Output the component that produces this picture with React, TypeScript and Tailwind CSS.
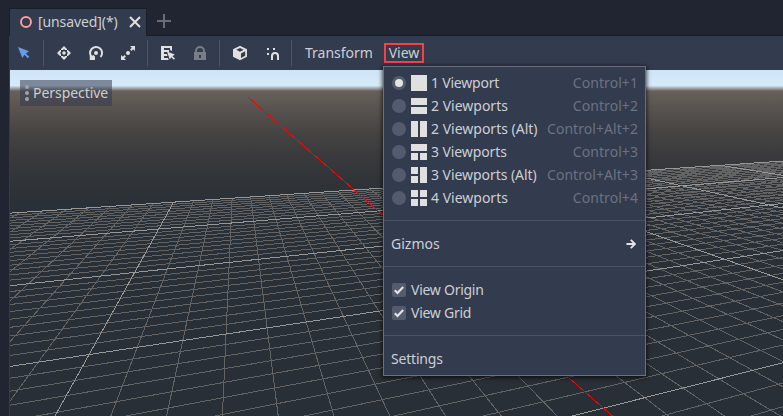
import type { ReactNode } from "react";

const HORIZON = 88;
const VP_A = 1868;
const VP_B = 237;

type Seg = { x1: number; y1: number; x2: number; y2: number; major: boolean };

// Slope of the far edge of the ground grid.
const FAR = 125.2 / (VP_A - 10);

function buildGrid(): Seg[] {
  const out: Seg[] = [];
  for (let n = 0; n <= 48; n++) {
    const m = 1 / (0.00799 - 0.0001466 * n) / (VP_A - 10);
    out.push({
      x1: 0,
      y1: HORIZON + m * VP_A,
      x2: 800,
      y2: HORIZON + m * (VP_A - 800),
      major: n % 10 === 0,
    });
  }
  for (let k = -9; k <= 52; k++) {
    if (k === 10) continue;
    const d = (55 + 55.8 * k - VP_B) / 328;
    const t = (FAR * (VP_A - VP_B)) / (1 + FAR * d);
    out.push({
      x1: VP_B + d * t,
      y1: HORIZON + t,
      x2: VP_B + d * 340,
      y2: HORIZON + 340,
      major: k % 10 === 0,
    });
  }
  return out.sort((a, b) => Number(a.major) - Number(b.major));
}

const GRID = buildGrid();

function Scene() {
  return (
    <svg className="block h-[346px] w-full" viewBox="10 70 773 346" preserveAspectRatio="none">
      <defs>
        <linearGradient id="sky" gradientUnits="userSpaceOnUse" x1="0" y1="70" x2="0" y2="416">
          <stop offset="0" stopColor="#cfe5f7" />
          <stop offset="0.045" stopColor="#d5eaf9" />
          <stop offset="0.061" stopColor="#686059" />
          <stop offset="0.1" stopColor="#5c5652" />
          <stop offset="0.175" stopColor="#474544" />
          <stop offset="0.25" stopColor="#393a3c" />
          <stop offset="0.32" stopColor="#303438" />
          <stop offset="0.39" stopColor="#2a3037" />
          <stop offset="1" stopColor="#292f36" />
        </linearGradient>
      </defs>
      <rect x="10" y="70" width="773" height="346" fill="url(#sky)" />
      <g shapeRendering="crispEdges">
        {GRID.map((s, i) => (
          <line key={i} x1={s.x1} y1={s.y1} x2={s.x2} y2={s.y2} stroke={s.major ? "#989898" : "#636363"} />
        ))}
        <line x1="248.5" y1="97.5" x2="613" y2="416.5" stroke="#ff0000" />
      </g>
    </svg>
  );
}

function Icon({ children, className = "" }: { children: ReactNode; className?: string }) {
  return (
    <svg viewBox="0 0 16 16" className={`size-4 shrink-0 ${className}`} fill="#e0e0e0">
      {children}
    </svg>
  );
}

const Divider = () => <div className="h-[26px] w-px shrink-0 bg-[#4c5365]" />;

const LAYOUTS: Record<string, string> = {
  one: "M0 0h16v16H0z",
  two: "M0 0h16v7H0zM0 9h16v7H0z",
  twoAlt: "M0 0h7v16H0zM9 0h7v16H9z",
  three: "M0 0h16v7H0zM0 9h7v7H0zM9 9h7v7H9z",
  threeAlt: "M0 0h7v7H0zM0 9h7v7H0zM9 0h7v16H9z",
  four: "M0 0h7v7H0zM9 0h7v7H9zM0 9h7v7H0zM9 9h7v7H9z",
};

const VIEWPORTS = [
  { label: "1 Viewport", keys: "Control+1", icon: "one", tracking: "tracking-[-0.2px]" },
  { label: "2 Viewports", keys: "Control+2", icon: "two", tracking: "" },
  { label: "2 Viewports (Alt)", keys: "Control+Alt+2", icon: "twoAlt", tracking: "" },
  { label: "3 Viewports", keys: "Control+3", icon: "three", tracking: "tracking-[-0.1px]" },
  { label: "3 Viewports (Alt)", keys: "Control+Alt+3", icon: "threeAlt", tracking: "tracking-[-0.05px]" },
  { label: "4 Viewports", keys: "Control+4", icon: "four", tracking: "" },
];

function MenuLine() {
  return (
    <div className="flex h-[23px] items-center">
      <div className="h-px w-full bg-[#4a5163]" />
    </div>
  );
}

function CheckItem({ label }: { label: string }) {
  return (
    <div className="flex h-[23px] items-center pt-px pl-2">
      <svg viewBox="0 0 14 14" className="size-3.5 shrink-0">
        <rect width="14" height="14" rx="2" fill="#545b6c" />
        <path d="M2.8 7.3 5.5 10 11.2 4" fill="none" stroke="#e4e4e4" strokeWidth="2.1" />
      </svg>
      <span className="-mt-px ml-[5px] tracking-[-0.26px]">{label}</span>
    </div>
  );
}

function ViewMenu() {
  return (
    <div className="absolute top-[66px] left-[383px] h-[310px] w-[263px] border border-[#6a7080] bg-[#333b4f] pt-1 shadow-[0_1px_4px_1px_rgba(0,0,0,0.65)]">
      {VIEWPORTS.map((v, i) => (
        <div key={v.label} className="flex h-[23px] items-center pt-px pr-2 pl-2">
          <svg viewBox="0 0 14 14" className="size-3.5 shrink-0">
            <circle cx="7" cy="7" r="7" fill="#545b6c" />
            {i === 0 && <circle cx="7" cy="7" r="4" fill="#e4e4e4" />}
          </svg>
          <Icon className="ml-[5px]">
            <path d={LAYOUTS[v.icon]} />
          </Icon>
          <span className={`-mt-px ml-1 ${v.tracking}`}>{v.label}</span>
          <span className="-mt-px -mr-px ml-auto tracking-[0.06px] text-[#6c7280]">{v.keys}</span>
        </div>
      ))}
      <MenuLine />
      <div className="flex h-[23px] items-center justify-between pt-px pr-[9px] pl-[7px]">
        <span className="-mt-px">Gizmos</span>
        <svg viewBox="0 0 10 10" className="size-2.5" fill="none" stroke="#e4e4e4" strokeWidth="1.9">
          <path d="M0.5 5H8.5M4.8 0.8 9 5 4.8 9.2" />
        </svg>
      </div>
      <MenuLine />
      <CheckItem label="View Origin" />
      <CheckItem label="View Grid" />
      <MenuLine />
      <div className="flex h-[23px] items-center pt-px pl-[7px]">
        <span className="-mt-px tracking-[-0.2px]">Settings</span>
      </div>
    </div>
  );
}

function Toolbar() {
  return (
    <div className="flex h-[34px] items-center bg-[#333b4f] pl-[7px]">
      <Icon>
        <path d="M2 2 6.3 13 8.5 9.8 11.8 13.2 13.2 11.8 9.8 8.6 13 6.3z" fill="#699ce8" />
      </Icon>
      <div className="ml-[11px]"><Divider /></div>
      <Icon className="ml-3">
        <circle cx="8" cy="8" r="1.8" />
        <path d="M8 1 11 4v1H9.3L8 4.2 6.7 5H5V4zM8 15l3-3v-1H9.3L8 11.8 6.7 11H5v1zM1 8l3-3h1v1.7L4.2 8 5 9.3V11H4zM15 8l-3-3h-1v1.7l.8 1.3-.8 1.3V11h1z" />
      </Icon>
      <Icon className="ml-4">
        <circle cx="8" cy="8" r="2" />
        <path d="M4.2 12.5A6 6 0 1 1 12.5 12" fill="none" stroke="#e0e0e0" strokeWidth="2" />
        <path d="M1.8 15v-4h1.6l2-1 1.6 1.6V15z" />
      </Icon>
      <Icon className="ml-4">
        <circle cx="8" cy="8" r="2" />
        <path d="M10 1h5v5l-1.8-1.8-1.7 1.7-1.4-1.4 1.7-1.7zM6 15H1v-5l1.8 1.8 1.7-1.7 1.4 1.4-1.7 1.7z" />
      </Icon>
      <div className="ml-[11px]"><Divider /></div>
      <Icon className="ml-3">
        <path d="M1 1h11v5l-2-1V3H4v2h5v2H4v2h3l.5 2H4v2h4l.7 2H1z" />
        <path d="m7 6.5 2.8 8 1.6-2.3 2.4 2.5 1.2-1.2-2.5-2.3 2.3-1.6z" />
      </Icon>
      <Icon className="ml-4 opacity-40">
        <path d="M8 1a5 5 0 0 0-5 5v1H2v8h12V7h-1V6a5 5 0 0 0-5-5m0 2a3 3 0 0 1 3 3v1H5V6a3 3 0 0 1 3-3M7 10h2v3H7z" fillRule="evenodd" />
      </Icon>
      <div className="ml-[11px]"><Divider /></div>
      <Icon className="ml-3">
        <path d="M8 .8 15 4.3v7.5L8 15.3 1 11.8V4.3zM8 3 4.3 4.8 8 6.7l3.7-1.9zM9 8.4v4.5l4.2-2.1V6.3z" fillRule="evenodd" />
      </Icon>
      <Icon className="ml-4">
        <path d="M3 3h2v2H3zM9 3h2v2H9zM3 8h2v2H3zM7 15v-4a4 4 0 0 1 8 0v4h-2v-4a2 2 0 0 0-4 0v4z" />
      </Icon>
      <div className="ml-[11px]"><Divider /></div>
      <span className="-mt-px ml-[13px] w-[69px]">Transform</span>
      <span className="ml-[10px] flex h-5 w-10 items-center justify-center border-2 border-[#f94144]">
        <span className="-mt-px">View</span>
      </span>
    </div>
  );
}

export default function App() {
  return (
    <div className="relative flex h-[416px] w-[783px] flex-col overflow-hidden bg-[#202531] pl-[9px] font-['Noto_Sans',sans-serif] text-[14px] leading-[19px] whitespace-nowrap text-[#cdcfd3]">
      <div className="flex h-9 shrink-0 items-end border-b border-[#1a1e28]">
        <div className="-mb-px flex h-7 w-[138px] items-center border-x border-t border-[#1a1e28] bg-[#333b4f] pl-2.5">
          <svg viewBox="0 0 12 12" className="-mt-px size-3 shrink-0" fill="none" stroke="#fc9c9c" strokeWidth="2">
            <circle cx="6" cy="6" r="5" />
          </svg>
          <span className="-mt-[2px] ml-1.5 w-[79px] tracking-[-0.1px]">[unsaved](*)</span>
          <svg viewBox="0 0 12 12" className="-mt-px ml-3 size-3 shrink-0" fill="none" stroke="#e0e0e0" strokeWidth="2">
            <path d="M1 1l10 10M11 1 1 11" />
          </svg>
        </div>
        <svg viewBox="0 0 14 14" className="mb-[7px] ml-2.5 size-3.5" fill="#696d76">
          <path d="M6 0h2v6h6v2H8v6H6V8H0V6h6z" />
        </svg>
      </div>
      <Toolbar />
      <div className="relative border-l border-[#333b4f]">
        <Scene />
        <div className="absolute top-2.5 left-2.5 flex h-[26px] w-[92px] items-center bg-[#333b4f]/55 pl-[5px] text-[#cdcfd1]">
          <svg viewBox="0 0 4 16" className="h-4 w-1" fill="#a0a3a8">
            <circle cx="2" cy="2" r="2" />
            <circle cx="2" cy="8" r="2" />
            <circle cx="2" cy="14" r="2" />
          </svg>
          <span className="-mt-px ml-1 tracking-[-0.05px]">Perspective</span>
        </div>
      </div>
      <ViewMenu />
    </div>
  );
}
